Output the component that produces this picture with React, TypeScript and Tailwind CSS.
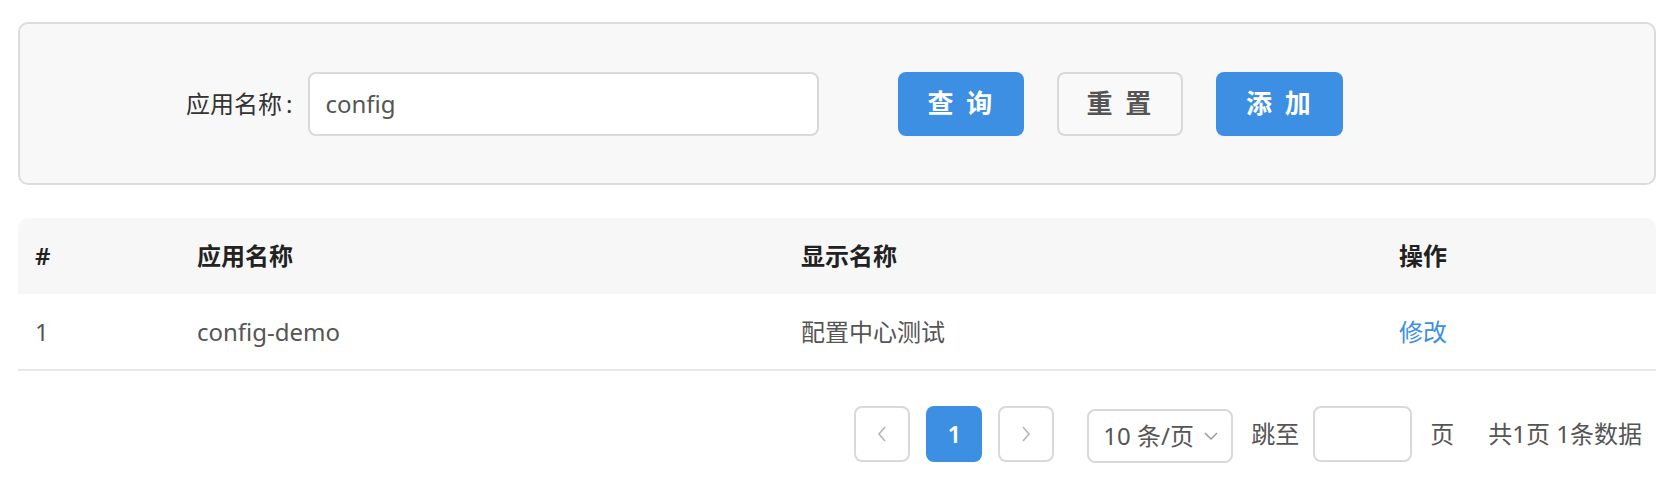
import React from "react";

const font = {
  fontFamily: '"Noto Sans", "Noto Sans CJK SC", sans-serif',
};

function ChevronLeft() {
  return (
    <svg width="12" height="18" viewBox="0 0 12 18" fill="none">
      <path d="M9 2 L3 9 L9 16" stroke="#b4b4b4" strokeWidth="1.6" />
    </svg>
  );
}

function ChevronRight() {
  return (
    <svg width="12" height="18" viewBox="0 0 12 18" fill="none">
      <path d="M3 2 L9 9 L3 16" stroke="#b4b4b4" strokeWidth="1.6" />
    </svg>
  );
}

function ChevronDown() {
  return (
    <svg width="14" height="10" viewBox="0 0 14 10" fill="none">
      <path d="M1 2 L7 8 L13 2" stroke="#9a9a9a" strokeWidth="1.5" />
    </svg>
  );
}

function SearchPanel() {
  return (
    <div className="mx-[18px] h-[163px] rounded-[10px] border-2 border-[#dcdcdc] bg-[#f8f8f8] flex items-center pl-[166px]">
      <label className="text-[24px] text-[#333] flex items-center">
        应用名称<span className="ml-[4px]">:</span>
      </label>
      <div className="ml-[16px] w-[511px] h-[64px] rounded-[8px] border-2 border-[#d9d9d9] bg-white flex items-center pl-[15px] text-[24px] text-[#555]">
        config
      </div>
      <button className="ml-[79px] w-[126px] h-[64px] rounded-[8px] bg-[#3c8fe3] text-white text-[26px] font-bold tracking-[3px]">
        查 询
      </button>
      <button className="ml-[33px] w-[126px] h-[64px] rounded-[8px] border-2 border-[#d9d9d9] bg-[#f9f9f9] text-[#555] text-[26px] font-bold tracking-[3px]">
        重 置
      </button>
      <button className="ml-[33px] w-[127px] h-[64px] rounded-[8px] bg-[#3c8fe3] text-white text-[26px] font-bold tracking-[3px]">
        添 加
      </button>
    </div>
  );
}

const rows = [{ id: 1, name: "config-demo", display: "配置中心测试" }];

function AppTable() {
  return (
    <div className="mx-[18px] mt-[33px]">
      <div className="grid grid-cols-[162px_604px_598px_1fr] h-[76px] items-center bg-[#f7f7f7] rounded-t-[10px] pl-[17px] text-[24px] font-semibold text-[#222]">
        <div>#</div>
        <div>应用名称</div>
        <div>显示名称</div>
        <div>操作</div>
      </div>
      {rows.map((r) => (
        <div
          key={r.id}
          className="grid grid-cols-[162px_604px_598px_1fr] h-[77px] items-center border-b-2 border-[#e8e8e8] pl-[17px] text-[24px] text-[#555]"
        >
          <div>{r.id}</div>
          <div>{r.name}</div>
          <div>{r.display}</div>
          <div className="text-[#3c8fe3]">修改</div>
        </div>
      ))}
    </div>
  );
}

function Pagination() {
  return (
    <div className="mt-[33px] flex items-center justify-end pr-[32px] text-[24px] text-[#555]">
      <div className="w-[56px] h-[56px] rounded-[8px] border-2 border-[#d9d9d9] flex items-center justify-center">
        <ChevronLeft />
      </div>
      <div className="ml-[16px] w-[56px] h-[56px] rounded-[8px] bg-[#3c8fe3] text-white font-semibold flex items-center justify-center">
        1
      </div>
      <div className="ml-[16px] w-[56px] h-[56px] rounded-[8px] border-2 border-[#d9d9d9] flex items-center justify-center">
        <ChevronRight />
      </div>
      <div className="ml-[33px] mt-[5px] w-[146px] h-[54px] rounded-[8px] border-2 border-[#d9d9d9] flex items-center pl-[14px] gap-[10px]">
        <span>10 条/页</span>
        <ChevronDown />
      </div>
      <span className="ml-[18px]">跳至</span>
      <div className="ml-[14px] w-[99px] h-[56px] rounded-[8px] border-2 border-[#d9d9d9]" />
      <span className="ml-[18px]">页</span>
      <span className="ml-[34px]">共1页 1条数据</span>
    </div>
  );
}

export default function App() {
  return (
    <div className="w-full min-h-[502px] bg-white pt-[22px]" style={font}>
      <SearchPanel />
      <AppTable />
      <Pagination />
    </div>
  );
}
